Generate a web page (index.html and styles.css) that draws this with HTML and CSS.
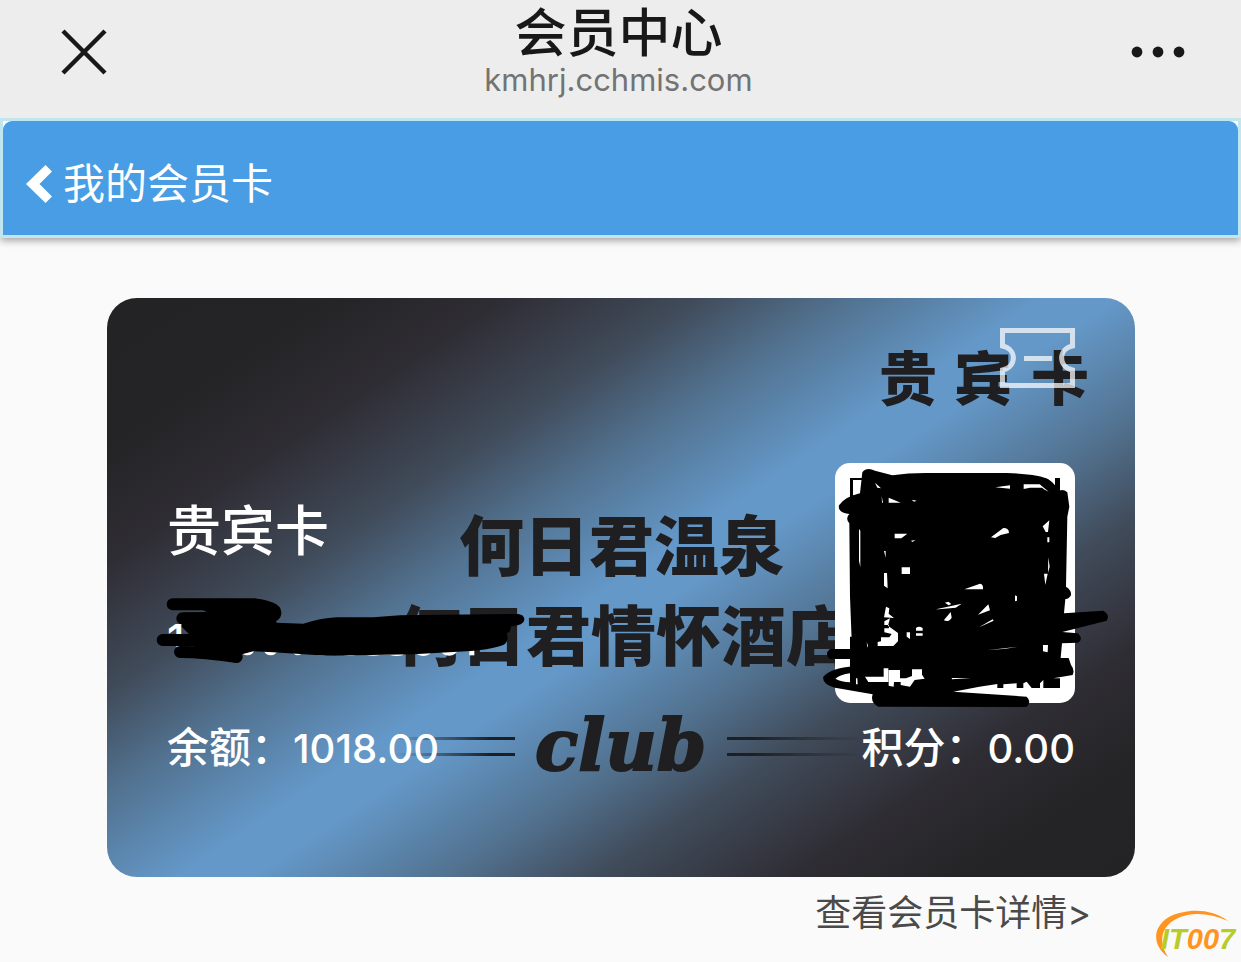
FILE: index.html
```html
<!DOCTYPE html>
<html lang="zh-CN">
<head>
<meta charset="utf-8">
<meta name="viewport" content="width=device-width, initial-scale=1">
<title>会员中心</title>
<link rel="stylesheet" href="styles.css">
</head>
<body>
<header class="topbar">
  <button class="icon-button" type="button" aria-label="关闭">
    <svg width="64" height="48" viewBox="-8 0 64 48"><path d="M3 3 45 45M45 3 3 45" stroke="#181818" stroke-width="4.4"/></svg>
  </button>
  <div class="heading">
    <h1 class="title">会员中心</h1>
    <p class="host">kmhrj.cchmis.com</p>
  </div>
  <button class="icon-button icon-button-end" type="button" aria-label="更多">
    <svg width="54" height="48" viewBox="0 0 54 48" fill="#181818"><circle cx="6" cy="24" r="5.4"/><circle cx="27" cy="24" r="5.4"/><circle cx="48" cy="24" r="5.4"/></svg>
  </button>
</header>

<nav class="navbar">
  <a class="back" href="#">
    <svg width="26" height="38" viewBox="0 0 26 38"><path d="M19.500 0 0 19 19.500 38 26 31.500 13.500 19 26 6.500Z" fill="#fff"/></svg>
    <span>我的会员卡</span>
  </a>
</nav>

<main class="content">
  <section class="card">
    <svg class="card-art" viewBox="107 298 1028 579" preserveAspectRatio="xMidYMid slice">
      <defs>
        <linearGradient id="sheen" gradientUnits="userSpaceOnUse" x1="352" y1="144" x2="944" y2="1030">
          <stop offset="0" stop-color="#232325"/>
          <stop offset=".11" stop-color="#242426"/>
          <stop offset=".2" stop-color="#2f2d34"/>
          <stop offset=".3" stop-color="#404b5a"/>
          <stop offset=".38" stop-color="#527290"/>
          <stop offset=".48" stop-color="#6498c8"/>
          <stop offset=".52" stop-color="#6498c8"/>
          <stop offset=".62" stop-color="#527290"/>
          <stop offset=".7" stop-color="#404b5a"/>
          <stop offset=".8" stop-color="#2f2d34"/>
          <stop offset=".89" stop-color="#242426"/>
          <stop offset="1" stop-color="#232325"/>
        </linearGradient>
        <linearGradient id="fade-left"><stop offset="0" stop-color="#1f1f21" stop-opacity="0"/><stop offset=".8" stop-color="#1f1f21"/></linearGradient>
        <linearGradient id="fade-right"><stop offset=".2" stop-color="#1f1f21"/><stop offset="1" stop-color="#1f1f21" stop-opacity="0"/></linearGradient>
      </defs>
      <rect x="107" y="298" width="1028" height="579" fill="url(#sheen)"/>
      <text class="art-label" x="879 954 1031" y="400">贵宾卡</text>
      <text class="art-name" x="459" y="570">何日君温泉</text>
      <text class="art-name" x="396" y="660">何日君情怀酒店</text>
      <text class="art-club" x="535" y="770">club</text>
      <path d="M395 737h120v3H395zM395 753h120v3H395z" fill="url(#fade-left)"/>
      <path d="M727 737h135v3H727zM727 753h135v3H727z" fill="url(#fade-right)"/>
    </svg>

    <div class="card-top">
      <svg width="75" height="60" viewBox="0 0 75 60" fill="none" stroke="#fff" stroke-opacity=".72" stroke-width="5">
        <path d="M2.500 18V2.500H72.500V18C58 21 58 39 72.500 42V57.500H2.500V42C17 39 17 21 2.500 18Z"/>
        <path d="M24 30.500H52"/>
      </svg>
    </div>
    <div class="card-main">
      <div class="holder">
        <h2 class="card-name">贵宾卡</h2>
        <p class="card-number">1</p>
      </div>
      <div class="qr"></div>
    </div>
    <div class="card-totals">
      <p>余额：<span class="amount">1018.00</span></p>
      <p>积分：<span class="amount">0.00</span></p>
    </div>

    <svg class="scribble" viewBox="107 298 1028 579" preserveAspectRatio="xMaxYMid slice" fill="none" stroke="#000" stroke-linecap="round" stroke-linejoin="round">
      <g transform="translate(140 480) scale(.33333)">
        <g fill="#fff" stroke="none">
          <ellipse cx="322" cy="510" rx="20" ry="16"/><ellipse cx="392" cy="510" rx="20" ry="16"/><ellipse cx="473" cy="510" rx="16" ry="16"/>
          <path d="M530 500h260v25q-20 6-40 0h-30q-20 4-40 0h-30q-20 4-40 0h-30q-20 4-50 0z"/>
          <ellipse cx="850" cy="510" rx="26" ry="18"/><ellipse cx="927" cy="510" rx="25" ry="17"/><path d="M988 500h15v26h-15z"/>
        </g>
        <path stroke-width="36" d="M98 373H345Q408 382 406 399Q405 412 370 412L127 415M68 480H180M120 516Q180 515 290 531"/>
        <path fill="#000" stroke="none" d="M170 380 360 375 400 395 390 425 130 430 200 396ZM130 400H400L410 428 490 431Q540 415 590 412H700L780 406 1135 402Q1154 405 1153 420 1152 436 1112 439 1115 455 1100 460 1108 480 1095 492 1070 507 980 514L820 523 560 527 400 517 340 514 300 524 150 505 185 490 150 465 125 440Z"/>
      </g>
      <g transform="translate(810 450) scale(.33333)">
        <path stroke="none" fill="#000" d="M120 84h40v6h-31v55h-9zM735 84h15v45h-15zM120 560h80v154h-80z"/>
        <path stroke="none" fill="#000" d="M150 130 157 67Q170 50 195 62L247 76Q300 68 360 69H590Q690 73 715 88 740 104 742 125 758 114 772 127L778 170 772 200 768 410Q785 420 783 436 776 448 766 447L762 490 880 482Q901 495 890 512L757 546 803 550Q822 566 804 578L756 580 752 624 776 624 783 645Q795 660 788 675L730 685H750V714H700V690L690 700V714H665L650 695 640 700V714H620V700L580 703V714H562V702L508 710 430 725 650 740Q666 755 650 771L205 770Q180 757 188 733L75 713Q35 702 40 680 60 655 135 648L133 627 60 627Q42 612 60 597L126 597 120 440 118 220Q105 205 118 192 82 188 87 166 105 140 150 130Z"/>
        <g stroke="none" fill="#fff">
          <path d="M133 92H149L150 126 133 134ZM195 98l18 17-11-2zM215 138l4 20h-3zM236 143l36 15h-36zM305 149l15 3-8 3zM556 112l44-6v10zM641 103h48l27 22-12-6-8-6h-36l-19 4z"/>
          <path d="M147 237l4 5v110l-4-20zM254 251h38l-18 14h-20zM303 272l14-2-10 6zM543 262l37-28q17 0 17 15l-25 6-16 9zM698 229l20-18-4 35h-7zM712 262h6v15h-6zM275 352h25v20h-25zM222 303h5v20zM222 369h9l2 46-11-8zM702 371h11l-7 34zM715 322l4 28-5 18z"/>
          <path d="M463 418l47-17q11 2 9 17zM405 458l10-3 9 7-8 4zM378 478l77-17-18 12-51 5zM402 510l20-24 3 17q-9 15-23 8zM504 494l31-31 5 18zM548 508l3 4-44 20zM615 436l6 3v13l-6 2zM228 470l10 5-2 16 16 13-30-2zM240 505l-6 22 30 22v25l-14 14h-47v-12l10-2v-12h25l7-10-22-5v-12h14v-10h-14v-11zM318 534q8-8 20 0v8h-20zM290 547h10v20l-10-7zM318 550h20v7h-20z"/>
          <path d="M699 585h15l-1 22-14-3zM170 575l4 12-2 6zM530 601l94-11-38 6zM76 686q15-12 44-16v27q-26-1-44-11zM165 680h56v-25h14v41h-60zM236 660h34v25h18l18-7v-20h30v16l8 12-30 4-14 20-28-5v-9h-20l-1 14-15-3zM425 684h58l-57 4zM138 685h4l1 18h-5z"/>
        </g>
      </g>
    </svg>
  </section>
  <a class="details" href="#">查看会员卡详情&gt;</a>
</main>

<svg class="watermark" width="84" height="54" viewBox="0 0 84 54" role="img" aria-label="IT007">
  <path d="M13 49C-2 38-4 20 14 9 31 0 57 0 73 13 55 5 36 3 21 11 6 19 3 34 13 49Z" fill="#ff9420"/>
  <text class="watermark-text" x="6" y="41"><tspan fill="#b7cc27">IT</tspan><tspan fill="#ff9420">00</tspan><tspan fill="#b7cc27">7</tspan></text>
</svg>
</body>
</html>
```

FILE: styles.css
```css
* { box-sizing: border-box; }

body {
  margin: 0;
  min-height: 100vh;
  background: #fafafa;
  font-family: Inter, "Noto Sans CJK SC", sans-serif;
  position: relative;
}

h1, h2, p { margin: 0; }
a { color: inherit; text-decoration: none; }
svg { display: block; }

.topbar {
  position: relative;
  z-index: 1;
  display: grid;
  grid-template-columns: 1fr auto 1fr;
  align-items: center;
  padding: 6px 56px 20px 52px;
  background: #ededed;
}

.icon-button {
  justify-self: start;
  padding: 0;
  border: 0;
  background: none;
}

.icon-button-end { justify-self: end; }

.heading { text-align: center; }

.title {
  font-size: 52px;
  line-height: 56px;
  font-weight: 500;
  color: #181818;
}

.host {
  font-size: 31px;
  line-height: 36px;
  color: #737373;
}

.navbar {
  border: 3px solid #c0e6f0;
  background: #fff;
  box-shadow: 0 2px 8px rgba(0, 0, 0, .4);
}

.back {
  display: flex;
  align-items: center;
  gap: 11px;
  padding: 33px 23px 21px;
  border-radius: 9px 9px 0 0;
  background: #489de4;
  color: #fff;
  font-size: 42px;
  line-height: 60px;
  font-weight: 400;
}

.content {
  display: flex;
  flex-direction: column;
  padding: 60px 106px 0 107px;
}

.card {
  position: relative;
  padding: 30px 60px 99px;
  border-radius: 30px;
  color: #fff;
}

.card-art,
.scribble {
  position: absolute;
  inset: 0;
  width: 100%;
  height: 100%;
}

.card-art { border-radius: 30px; }
.scribble { overflow: visible; pointer-events: none; }

.art-label,
.art-name {
  font-family: "Noto Sans CJK SC", sans-serif;
  font-weight: 900;
  fill: #1f1f21;
}

.art-label { font-size: 58px; }
.art-name { font-size: 65px; }

.art-club {
  font-family: "DejaVu Serif", serif;
  font-size: 71px;
  font-weight: 700;
  font-style: italic;
  fill: #1f1f21;
  stroke: #1f1f21;
  stroke-width: 2px;
}

.card-top,
.card-main,
.card-totals {
  position: relative;
  display: flex;
  justify-content: space-between;
}

.card-top { justify-content: flex-end; margin-bottom: 75px; }
.card-main { margin-bottom: 15px; }

.holder {
  display: flex;
  flex-direction: column;
  gap: 48px;
  padding-top: 39px;
}

.card-name {
  font-size: 54px;
  line-height: 60px;
  font-weight: 500;
}

.card-number,
.card-totals {
  font-size: 42px;
  line-height: 60px;
  font-weight: 500;
}

.amount {
  font-size: 40px;
  line-height: 1;
}

.qr {
  width: 240px;
  height: 240px;
  border-radius: 15px;
  background: #fff;
}

.details {
  align-self: flex-end;
  padding-right: 44px;
  color: #4a4a4a;
  font-size: 36px;
  line-height: 72px;
  font-weight: 400;
}

.watermark {
  position: absolute;
  right: 2px;
  bottom: 0;
}

.watermark-text {
  font-family: "Liberation Sans", sans-serif;
  font-size: 29px;
  font-weight: 700;
  font-style: italic;
}
```
